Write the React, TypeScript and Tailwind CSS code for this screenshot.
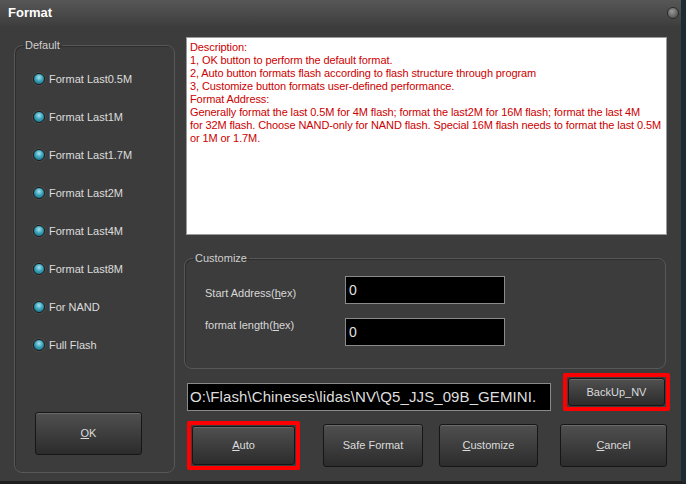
import React from "react";

const font = { fontFamily: '"Liberation Sans", Arial, sans-serif' };

function Led() {
  return (
    <span className="inline-block w-[12px] h-[12px] rounded-full border border-[#1c1c1c] bg-[radial-gradient(circle_at_50%_35%,#a9e3ee_0%,#3aa3ba_45%,#145a6c_100%)] shadow-[0_0_0_1px_#4a4a4a]" />
  );
}

function Btn({ children, className = "" }: { children: React.ReactNode; className?: string }) {
  return (
    <div
      className={
        "flex items-center justify-center rounded-[3px] border border-[#161616] bg-gradient-to-b from-[#505050] to-[#2c2c2c] text-[11px] text-[#dcdcdc] shadow-[inset_0_1px_0_#6a6a6a] " +
        className
      }
    >
      {children}
    </div>
  );
}

const radios = [
  "Format Last0.5M",
  "Format Last1M",
  "Format Last1.7M",
  "Format Last2M",
  "Format Last4M",
  "Format Last8M",
  "For NAND",
  "Full Flash",
];

const desc = [
  "Description:",
  "1, OK button to perform the default format.",
  "2, Auto button formats flash according to flash structure through program",
  "3, Customize button formats user-defined performance.",
  "Format Address:",
  "Generally format the last 0.5M for 4M flash; format the last2M for 16M flash; format the last 4M",
  "for 32M flash. Choose NAND-only for NAND flash. Special 16M flash needs to format the last 0.5M",
  "or 1M or 1.7M.",
];

export default function App() {
  return (
    <div
      style={font}
      className="w-[686px] h-[484px] flex flex-col bg-[#3c3c3c] border-r-[5px] border-b-[3px] border-r-[#1e2a34] border-b-[#1e1e1e] overflow-hidden"
    >
      {/* title bar */}
      <div className="h-[26px] shrink-0 flex items-center justify-between pl-[8px] pr-[2px] bg-gradient-to-b from-[#575757] to-[#3e3e3e]">
        <span className="text-[13px] font-bold text-white">Format</span>
        <span className="w-[12px] h-[12px] rounded-full border border-[#2a2a2a] bg-[radial-gradient(circle_at_40%_35%,#9a9a9a,#5a5a5a_70%)]" />
      </div>

      <div className="flex flex-1">
        {/* left group */}
        <fieldset className="ml-[14px] mt-[12px] w-[161px] h-[435px] flex flex-col border border-[#575757] rounded-[8px] shadow-[inset_1px_1px_0_#2e2e2e]">
          <legend className="ml-[8px] px-[2px] text-[11px] leading-[14px] text-[#d0d0d0]">Default</legend>
          <div className="flex flex-col pt-[8px] pl-[18px]">
            {radios.map((r) => (
              <div key={r} className="h-[38px] flex items-center gap-[4px]">
                <Led />
                <span className="text-[11px] text-[#dcdcdc]">{r}</span>
              </div>
            ))}
          </div>
          <div className="mt-auto mb-[17px] ml-[20px]">
            <Btn className="w-[107px] h-[43px]">
              <span>
                <span className="underline">O</span>K
              </span>
            </Btn>
          </div>
        </fieldset>

        {/* right column */}
        <div className="ml-[9px] mt-[11px] w-[486px] flex flex-col">
          <div className="ml-[2px] w-[481px] h-[198px] bg-white border border-[#9a9a9a] px-[3px] pt-[3px] text-[11px] leading-[13px] tracking-[-0.1px] text-[#cc0000] overflow-hidden">
            {desc.map((l, i) => (
              <div key={i} className="whitespace-nowrap">{l}</div>
            ))}
          </div>

          <fieldset className="mt-[16px] w-[482px] h-[118px] border border-[#575757] rounded-[8px] shadow-[inset_1px_1px_0_#2e2e2e]">
            <legend className="ml-[8px] px-[2px] text-[11px] leading-[14px] text-[#d0d0d0]">Customize</legend>
            <div className="flex flex-col pt-[11px] pl-[20px] gap-[14px]">
              <div className="flex items-start">
                <span className="w-[140px] mt-[10px] text-[11px] leading-[14px] text-[#d8d8d8]">
                  Start Address(<span className="underline">h</span>ex)
                </span>
                <div className="w-[160px] h-[28px] bg-black border border-[#8a8a8a] flex items-center pl-[3px] text-[14px] text-[#e0e0e0]">0</div>
              </div>
              <div className="flex items-start">
                <span className="w-[140px] text-[11px] leading-[14px] text-[#d8d8d8]">
                  format length(<span className="underline">h</span>ex)
                </span>
                <div className="w-[160px] h-[28px] bg-black border border-[#8a8a8a] flex items-center pl-[3px] text-[14px] text-[#e0e0e0]">0</div>
              </div>
            </div>
          </fieldset>

          <div className="mt-[4px] flex items-end">
            <div className="ml-[3px] w-[364px] h-[28px] bg-black border border-[#8a8a8a] flex items-center pl-[2px] overflow-hidden whitespace-nowrap text-[15px] tracking-[0.1px] text-[#dedede]">
              O:\Flash\Chineses\lidas\NV\Q5_JJS_09B_GEMINI.
            </div>
            <div className="ml-[12px] w-[107px] h-[38px] border-[4px] border-[#ff0000] rounded-[2px] p-[1px] flex">
              <Btn className="flex-1">BackUp_NV</Btn>
            </div>
          </div>

          <div className="mt-[10px] flex items-center">
            <div className="ml-[3px] w-[113px] h-[49px] border-[4px] border-[#ff0000] rounded-[2px] p-[1px] flex">
              <Btn className="flex-1">
                <span>
                  <span className="underline">A</span>uto
                </span>
              </Btn>
            </div>
            <Btn className="ml-[23px] w-[100px] h-[43px]">Safe Format</Btn>
            <Btn className="ml-[16px] w-[99px] h-[43px]">
              <span>
                <span className="underline">C</span>ustomize
              </span>
            </Btn>
            <Btn className="ml-[22px] w-[107px] h-[43px]">
              <span>
                <span className="underline">C</span>ancel
              </span>
            </Btn>
          </div>
        </div>
      </div>
    </div>
  );
}
